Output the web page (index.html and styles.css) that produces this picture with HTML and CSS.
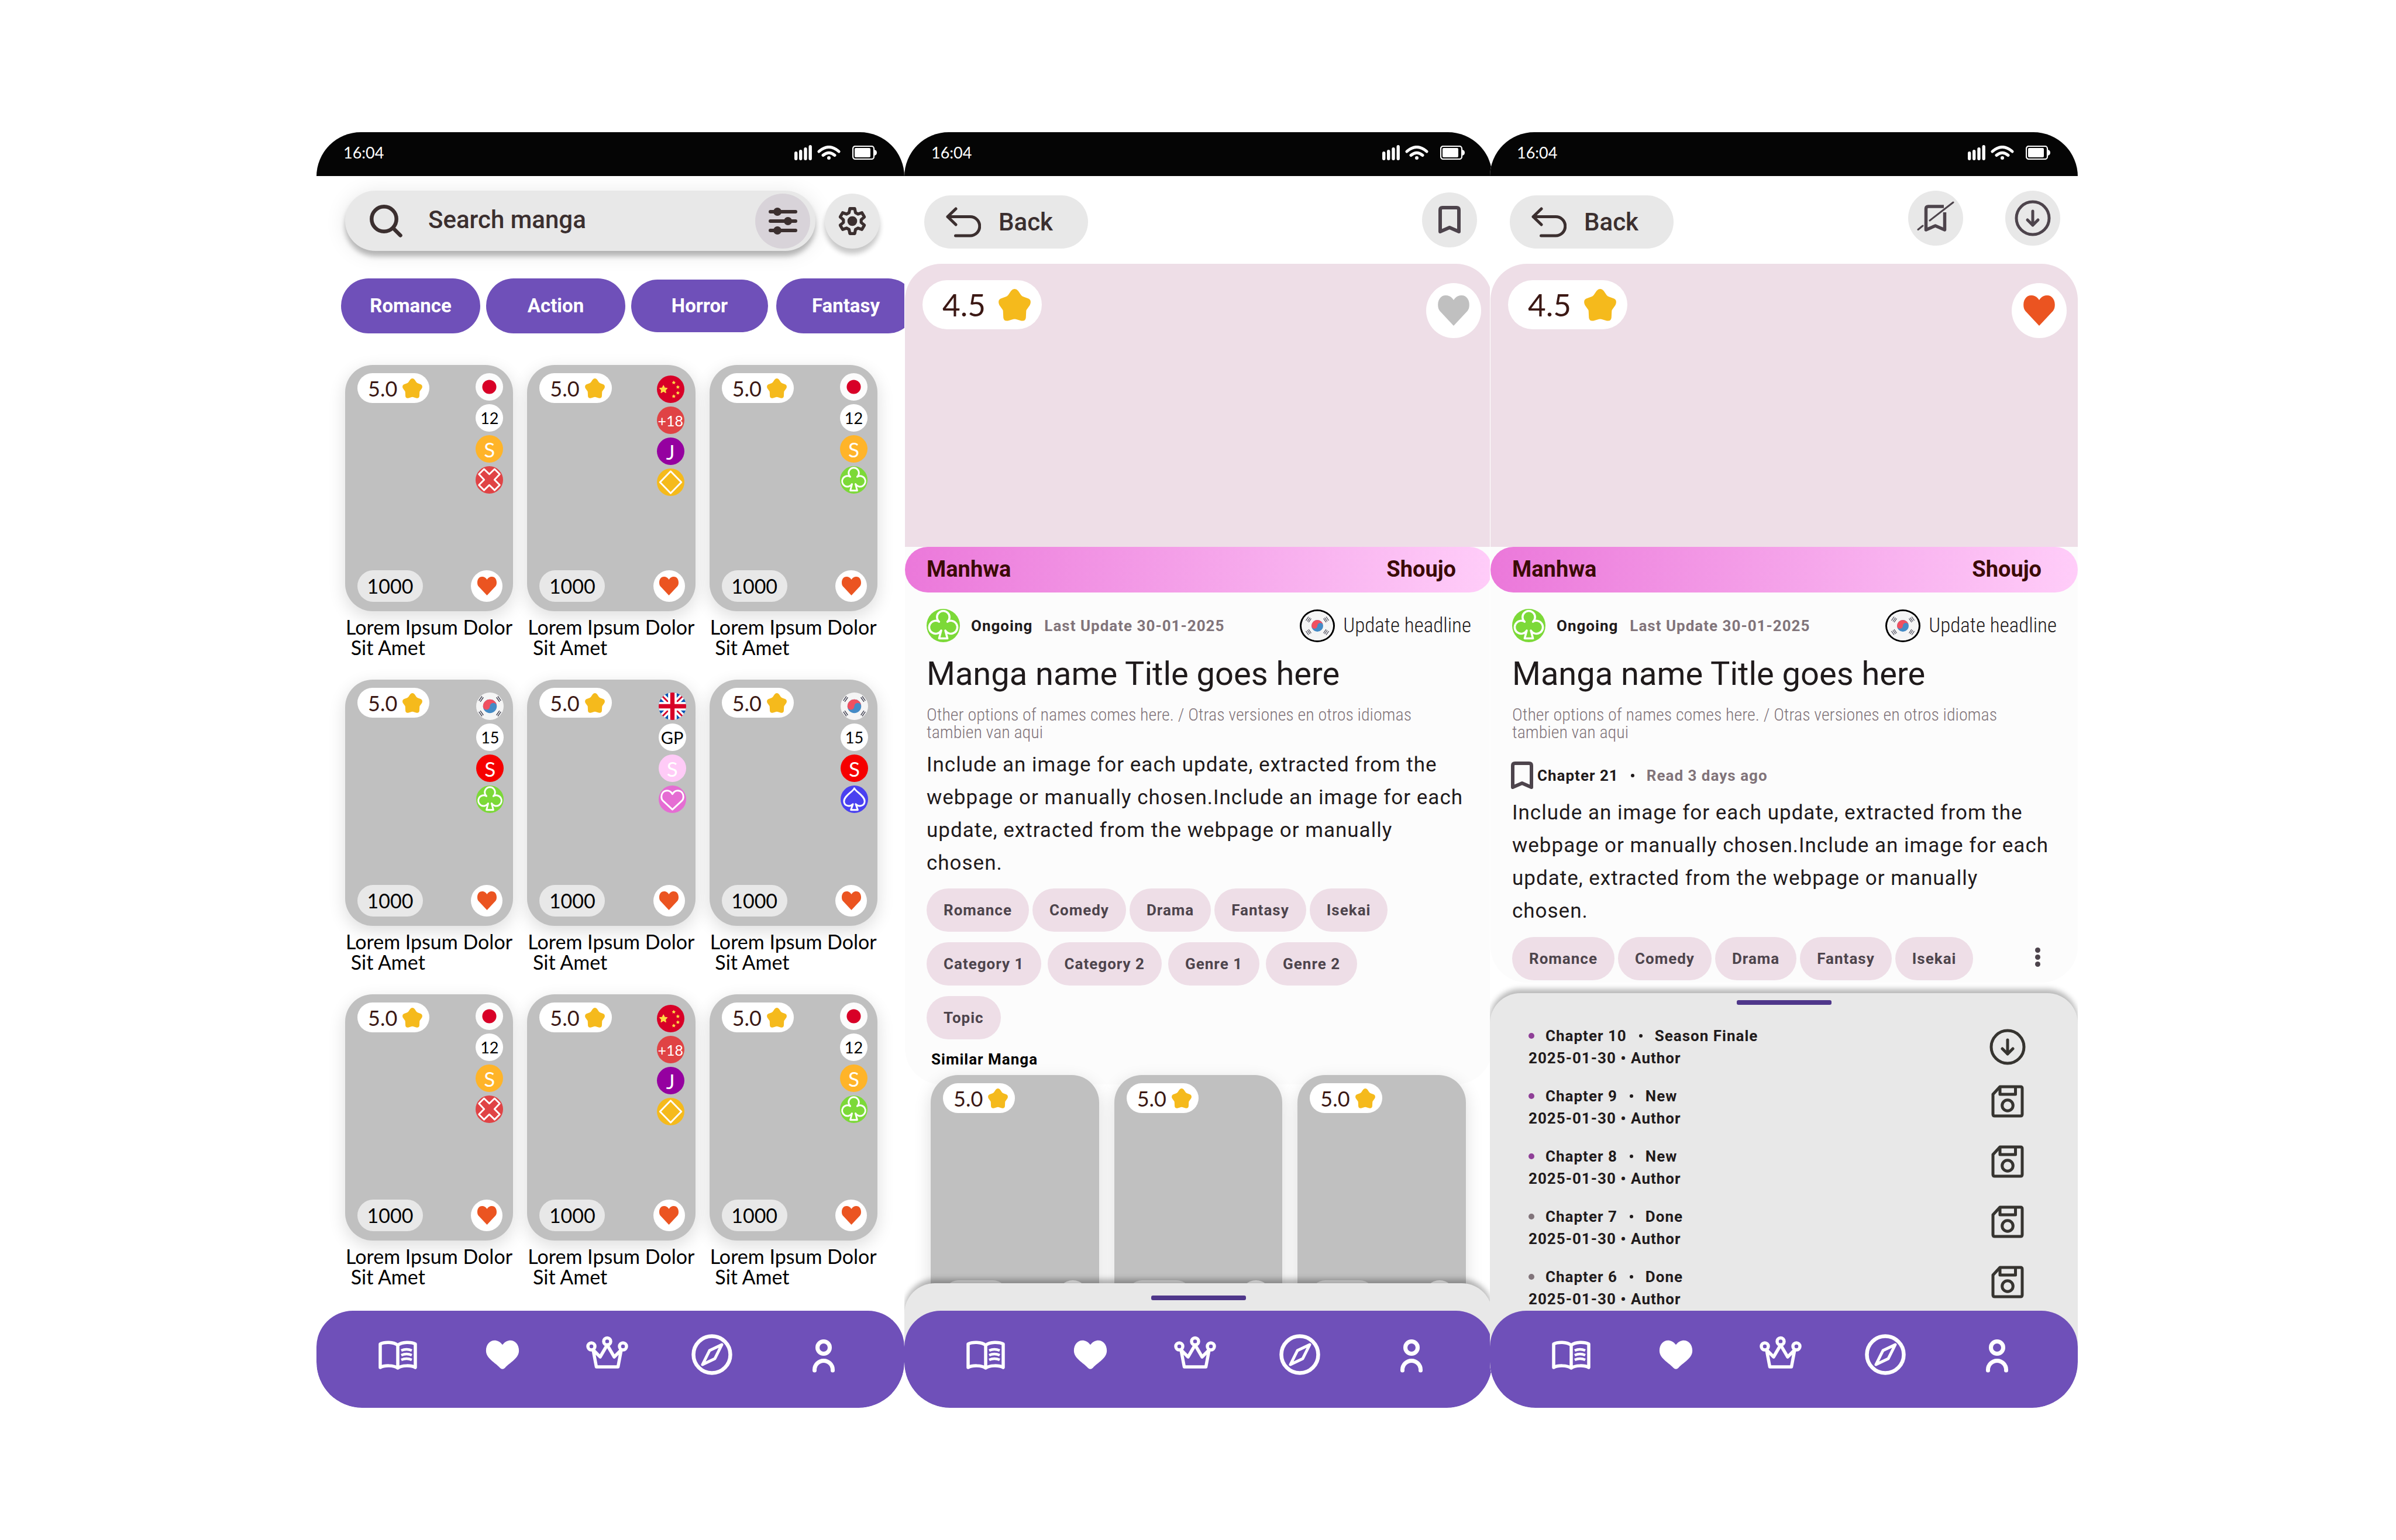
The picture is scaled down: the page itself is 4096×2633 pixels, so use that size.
FILE: index.html
```html
<!DOCTYPE html>
<html lang="en">
<head>
<meta charset="utf-8">
<meta name="viewport" content="width=device-width, initial-scale=1">
<title>Manga reader</title>
<link rel="stylesheet" href="styles.css">
</head>
<body>
<svg class="sprite" aria-hidden="true">
  <symbol id="signal" viewBox="0 0 30 26"><path fill="currentColor" d="M0 14q0-3 2.700-3t2.700 3v9q0 3-2.700 3T0 23zM8 11q0-3 2.700-3t2.700 3v12q0 3-2.700 3T8 23zM16.300 7q0-3 2.700-3t2.700 3v16q0 3-2.700 3t-2.700-3zM24.500 3q0-3 2.700-3t2.700 3v20q0 3-2.700 3t-2.700-3z"/></symbol>
  <symbol id="wifi" viewBox="0 0 40 24"><g fill="none" stroke="currentColor" stroke-width="5" stroke-linecap="round"><path d="M3 10Q20-5 37 10M10 16.500Q20 8 30 16.500"/></g><circle cx="20" cy="21" r="3" fill="currentColor"/></symbol>
  <symbol id="battery" viewBox="0 0 42 24"><rect x="1" y="1" width="36" height="22" rx="4" fill="none" stroke="currentColor" stroke-width="2.200"/><rect x="4" y="4" width="27" height="16" rx="2" fill="currentColor"/><path d="M38 7q4 1 4 5t-4 5z" fill="currentColor"/></symbol>
  <symbol id="search" viewBox="0 0 56 56"><g fill="none" stroke="currentColor" stroke-width="6.500" stroke-linecap="round"><circle cx="24.500" cy="24.500" r="21.200"/><path d="M41 41L52.500 52.500"/></g></symbol>
  <symbol id="sliders" viewBox="0 0 49 46"><path d="M3 7H46M3 23H46M3 39H46" stroke="currentColor" stroke-width="6" stroke-linecap="round"/><g fill="currentColor"><circle cx="15" cy="7" r="7"/><circle cx="33" cy="23" r="7"/><circle cx="15" cy="39" r="7"/></g></symbol>
  <symbol id="gear" viewBox="-24 -24 48 48"><path fill="none" stroke="currentColor" stroke-width="5" stroke-linejoin="round" d="M-4-20.500H4L5.300-13.800 9.300-11.500 15.800-13.700 19.800-6.800 14.600-2.300V2.300L19.800 6.800 15.800 13.700 9.300 11.500 5.300 13.800 4 20.500H-4L-5.300 13.800-9.300 11.500-15.800 13.700-19.800 6.800-14.600 2.300V-2.300L-19.800-6.800-15.800-13.700-9.300-11.500-5.300-13.800z"/><circle r="8" fill="currentColor"/></symbol>
  <symbol id="back" viewBox="0 0 60 52"><path fill="none" stroke="currentColor" stroke-width="5" stroke-linecap="round" stroke-linejoin="round" d="M17 3L3 16.500 17 30M3 16.500H41.500a16 16 0 0 1 0 32.500H16.500"/></symbol>
  <symbol id="bookmark" viewBox="0 0 38 47"><path fill="none" stroke="currentColor" stroke-width="6" stroke-linejoin="round" d="M3 44V7q0-4 4-4H31q4 0 4 4V44L19 37z"/></symbol>
  <symbol id="bookmark-off" viewBox="0 0 64 58"><g fill="none" stroke="currentColor" stroke-linejoin="round"><path stroke-width="5.500" d="M46 9H19.500q-4 0-4 4V49L31.500 42 47.500 49V19"/><path stroke-width="3" stroke-linecap="round" d="M62 2L22 33M10 42L2 48.500"/></g></symbol>
  <symbol id="download" viewBox="0 0 62 62"><g fill="none" stroke="currentColor" stroke-width="5" stroke-linecap="round" stroke-linejoin="round"><circle cx="31" cy="31" r="28"/><path d="M31 19V43M22 34L31 43 40 34"/></g></symbol>
  <symbol id="floppy" viewBox="0 0 56 56"><g fill="none" stroke="currentColor" stroke-width="5" stroke-linejoin="round"><path d="M15 3H50q3 0 3 3V50q0 3-3 3H6q-3 0-3-3V16z"/><path d="M15 3V16H41.500V3"/><circle cx="28" cy="35" r="9.300"/></g></symbol>
  <symbol id="star" viewBox="0 0 100 100"><path fill="#f5ba1c" d="M50 0q6 0 11 6L70 19q3 4 7 5L93 30Q102 34 99 46 98 49 97 51L87 65q-1 2-1 4L85 89Q84 101 71 99L54 94q-4-1-8 0L29 99Q16 101 15 89L14 69q0-2-1-4L3 51Q2 49 1 46-2 34 7 30L23 24q4-1 7-5L39 6q5-6 11-6z"/></symbol>
  <symbol id="heart" viewBox="0 0 100 97"><path fill="currentColor" d="M50 15C44 5 35 0 25 0 8 0 0 15 0 30 0 39 2 45 6 50L50 97 94 50C98 45 100 39 100 30 100 15 92 0 75 0 65 0 56 5 50 15z"/></symbol>
  <symbol id="nav-heart" viewBox="-14 -20 128 128"><path fill="currentColor" d="M50 14C30-11 0 2 0 32 0 56 28 68 42 84q8 8 16 0C72 68 100 56 100 32 100 2 70-11 50 14z"/></symbol>
  <symbol id="book" viewBox="-3 -12 72 72"><g fill="none" stroke="currentColor" stroke-width="5.500" stroke-linejoin="round"><path d="M33 8C26 2 10 2 3 6V46C10 42 26 42 33 47 40 42 56 42 63 46V6C56 2 40 2 33 8V47"/><path stroke-width="4.500" d="M39 17Q48 13 57 17M39 25Q48 21 57 25M39 33Q48 29 57 33"/></g></symbol>
  <symbol id="crown" viewBox="0 -5 72 72"><g fill="none" stroke="currentColor" stroke-width="5.500" stroke-linejoin="round"><circle cx="9" cy="17" r="6"/><circle cx="36" cy="8.500" r="6"/><circle cx="63" cy="17" r="6"/><path d="M12 23L17.500 52H54.500L60 23 48 35 36 14.500 24 35z"/></g></symbol>
  <symbol id="compass" viewBox="-1 -1 72 72"><g fill="none" stroke="currentColor" stroke-width="5" stroke-linejoin="round"><circle cx="35" cy="35" r="31.500" stroke-width="6.500"/><path d="M52 18L31 28 19 52 40 42z"/></g></symbol>
  <symbol id="person" viewBox="-17 -10 72 72"><g fill="none" stroke="currentColor" stroke-width="7" stroke-linecap="round"><circle cx="19" cy="14" r="10.500"/><path d="M3.500 53V52a15.500 15.500 0 0 1 31 0v1"/></g></symbol>
  <symbol id="cross" viewBox="0 0 80 80"><path class="suit" d="M24.700 8.500L40 23.500 55.300 8.500 70.300 23.500 55 39.500 70.300 55 55.300 70 40 55 24.700 70 9.700 55 25 39.500 9.700 23.500z"/></symbol>
  <symbol id="diamond" viewBox="0 0 80 80"><path class="suit" d="M40 8L71 40 40 72 9 40z"/></symbol>
  <symbol id="club" viewBox="0 0 80 80"><path class="suit" d="M30 31A15 15 0 1 1 50 31 15.500 15.500 0 1 1 45 52L50 71H30L35 52A15.500 15.500 0 1 1 30 31z"/></symbol>
  <symbol id="spade" viewBox="0 0 80 80"><path class="suit" d="M40 8C36 18 10 30 10 46 10 59 26 64 36 54L30 71H50L44 54C54 64 70 59 70 46 70 30 44 18 40 8z"/></symbol>
  <symbol id="love" viewBox="0 0 80 80"><path class="suit" d="M40 25C36 18 31 15 25 15 13 15 8 24 8 33 8 38 10 42 13 45L40 70 67 45C70 42 72 38 72 33 72 24 67 15 55 15 49 15 44 18 40 25z"/></symbol>
  <symbol id="jp" viewBox="0 0 80 80"><rect width="80" height="80" fill="#fcfcfc"/><circle cx="40" cy="40" r="20.500" fill="#d80027"/></symbol>
  <symbol id="cn" viewBox="0 0 80 80"><rect width="80" height="80" fill="#d80027"/><g fill="#ffda44"><path stroke="#ffda44" stroke-width="2" stroke-linejoin="round" d="M19 29l3.500 7 7.500 1-5.500 5.500 1.500 7.500-7-4-7 4 1.500-7.500-5.500-5.500 7.500-1z"/><path d="M49 15l2 3.500 3.500.5-2.500 2.500.5 4-3.500-2-3.500 2 .5-4-2.500-2.500 3.500-.5zM61 28l2 3.500 3.500.5-2.500 2.500.5 4-3.500-2-3.500 2 .5-4-2.500-2.500 3.500-.5zM61 45l2 3.500 3.500.5-2.500 2.500.5 4-3.500-2-3.500 2 .5-4-2.500-2.500 3.500-.5zM49 55l2 3.500 3.500.5-2.500 2.500.5 4-3.500-2-3.500 2 .5-4-2.500-2.500 3.500-.5z"/></g></symbol>
  <symbol id="kr" viewBox="0 0 80 80"><rect x="-10" y="-10" width="100" height="100" fill="#f5f5f5"/><circle cx="40" cy="40" r="20" fill="#448bc6"/><path fill="#f05060" d="M20 40A20 20 0 0 1 60 40 10 10 0 0 0 40 40 10 10 0 0 1 20 40z"/><g stroke="#464655" stroke-width="2.500"><path d="M3 21L12 8M8 24L17 11M12 27L21 14M77 21L68 8M72 24L63 11M68 27L59 14M3 59L12 72M8 56L17 69M12 53L21 66M77 59L68 72M72 56L63 69M68 53L59 66"/></g></symbol>
  <symbol id="kr-wide" viewBox="-10 -10 100 100"><rect x="-10" y="-10" width="100" height="100" fill="#f5f5f5"/><circle cx="40" cy="40" r="20" fill="#448bc6"/><path fill="#f05060" d="M20 40A20 20 0 0 1 60 40 10 10 0 0 0 40 40 10 10 0 0 1 20 40z"/><g stroke="#464655" stroke-width="2.500"><path d="M1 22L10 9M6 25L15 12M10 28L19 15M79 22L70 9M74 25L65 12M70 28L61 15M1 58L10 71M6 55L15 68M10 52L19 65M79 58L70 71M74 55L65 68M70 52L61 65"/></g></symbol>
  <symbol id="uk" viewBox="0 0 80 80"><rect width="80" height="80" fill="#0052b4"/><path stroke="#fff" stroke-width="17" d="M0 0L80 80M80 0L0 80"/><path stroke="#d80027" stroke-width="5" d="M0 0L80 80M80 0L0 80"/><path stroke="#fff" stroke-width="25" d="M40 0V80M0 40H80"/><path stroke="#d80027" stroke-width="12.500" d="M40 0V80M0 40H80"/></symbol>
</svg>

<main class="board">
  <section class="phone" aria-label="Browse">
    <div class="status"><time>16:04</time><span class="status-icons"><svg class="i-signal"><use href="#signal"/></svg><svg class="i-wifi"><use href="#wifi"/></svg><svg class="i-battery"><use href="#battery"/></svg></span></div>
    <div class="search-row">
      <form class="search" role="search">
        <svg class="i-search"><use href="#search"/></svg>
        <input type="text" aria-label="Search manga" placeholder="Search manga">
        <button type="button" class="round filter" aria-label="Filters"><svg class="i-sliders"><use href="#sliders"/></svg></button>
      </form>
      <button type="button" class="round settings" aria-label="Settings"><svg class="i-gear"><use href="#gear"/></svg></button>
    </div>
    <div class="categories">
      <button type="button">Romance</button><button type="button">Action</button><button type="button" class="compact">Horror</button><button type="button">Fantasy</button>
    </div>
    <div class="library">
      <article>
        <div class="cover"><span class="rating">5.0<svg><use href="#star"/></svg></span>
          <div class="marks"><svg class="mark"><use href="#jp"/></svg><span class="mark age">12</span><span class="mark amber">S</span><svg class="mark red"><use href="#cross"/></svg></div>
          <div class="cover-foot"><span class="count">1000</span><button type="button" class="like" aria-label="Like"><svg><use href="#heart"/></svg></button></div></div>
        <h3>Lorem Ipsum Dolor<br>&nbsp;Sit Amet</h3>
      </article>
      <article>
        <div class="cover"><span class="rating">5.0<svg><use href="#star"/></svg></span>
          <div class="marks mid"><svg class="mark"><use href="#cn"/></svg><span class="mark age red">+18</span><span class="mark purple">J</span><svg class="mark gold"><use href="#diamond"/></svg></div>
          <div class="cover-foot"><span class="count">1000</span><button type="button" class="like" aria-label="Like"><svg><use href="#heart"/></svg></button></div></div>
        <h3>Lorem Ipsum Dolor<br>&nbsp;Sit Amet</h3>
      </article>
      <article>
        <div class="cover"><span class="rating">5.0<svg><use href="#star"/></svg></span>
          <div class="marks"><svg class="mark"><use href="#jp"/></svg><span class="mark age">12</span><span class="mark amber">S</span><svg class="mark green"><use href="#club"/></svg></div>
          <div class="cover-foot"><span class="count">1000</span><button type="button" class="like" aria-label="Like"><svg><use href="#heart"/></svg></button></div></div>
        <h3>Lorem Ipsum Dolor<br>&nbsp;Sit Amet</h3>
      </article>
      <article>
        <div class="cover"><span class="rating">5.0<svg><use href="#star"/></svg></span>
          <div class="marks low"><svg class="mark"><use href="#kr"/></svg><span class="mark age">15</span><span class="mark scarlet">S</span><svg class="mark green"><use href="#club"/></svg></div>
          <div class="cover-foot"><span class="count">1000</span><button type="button" class="like" aria-label="Like"><svg><use href="#heart"/></svg></button></div></div>
        <h3>Lorem Ipsum Dolor<br>&nbsp;Sit Amet</h3>
      </article>
      <article>
        <div class="cover"><span class="rating">5.0<svg><use href="#star"/></svg></span>
          <div class="marks low"><svg class="mark"><use href="#uk"/></svg><span class="mark age gp">GP</span><span class="mark blush">S</span><svg class="mark pink"><use href="#love"/></svg></div>
          <div class="cover-foot"><span class="count">1000</span><button type="button" class="like" aria-label="Like"><svg><use href="#heart"/></svg></button></div></div>
        <h3>Lorem Ipsum Dolor<br>&nbsp;Sit Amet</h3>
      </article>
      <article>
        <div class="cover"><span class="rating">5.0<svg><use href="#star"/></svg></span>
          <div class="marks low"><svg class="mark"><use href="#kr"/></svg><span class="mark age">15</span><span class="mark scarlet">S</span><svg class="mark blue"><use href="#spade"/></svg></div>
          <div class="cover-foot"><span class="count">1000</span><button type="button" class="like" aria-label="Like"><svg><use href="#heart"/></svg></button></div></div>
        <h3>Lorem Ipsum Dolor<br>&nbsp;Sit Amet</h3>
      </article>
      <article>
        <div class="cover"><span class="rating">5.0<svg><use href="#star"/></svg></span>
          <div class="marks"><svg class="mark"><use href="#jp"/></svg><span class="mark age">12</span><span class="mark amber">S</span><svg class="mark red"><use href="#cross"/></svg></div>
          <div class="cover-foot"><span class="count">1000</span><button type="button" class="like" aria-label="Like"><svg><use href="#heart"/></svg></button></div></div>
        <h3>Lorem Ipsum Dolor<br>&nbsp;Sit Amet</h3>
      </article>
      <article>
        <div class="cover"><span class="rating">5.0<svg><use href="#star"/></svg></span>
          <div class="marks mid"><svg class="mark"><use href="#cn"/></svg><span class="mark age red">+18</span><span class="mark purple">J</span><svg class="mark gold"><use href="#diamond"/></svg></div>
          <div class="cover-foot"><span class="count">1000</span><button type="button" class="like" aria-label="Like"><svg><use href="#heart"/></svg></button></div></div>
        <h3>Lorem Ipsum Dolor<br>&nbsp;Sit Amet</h3>
      </article>
      <article>
        <div class="cover"><span class="rating">5.0<svg><use href="#star"/></svg></span>
          <div class="marks"><svg class="mark"><use href="#jp"/></svg><span class="mark age">12</span><span class="mark amber">S</span><svg class="mark green"><use href="#club"/></svg></div>
          <div class="cover-foot"><span class="count">1000</span><button type="button" class="like" aria-label="Like"><svg><use href="#heart"/></svg></button></div></div>
        <h3>Lorem Ipsum Dolor<br>&nbsp;Sit Amet</h3>
      </article>
    </div>
    <nav class="tabs"><a href="#library" aria-label="Library"><svg><use href="#book"/></svg></a><a href="#favourites" aria-label="Favourites"><svg><use href="#nav-heart"/></svg></a><a href="#top" aria-label="Top"><svg><use href="#crown"/></svg></a><a href="#explore" aria-label="Explore"><svg><use href="#compass"/></svg></a><a href="#profile" aria-label="Profile"><svg><use href="#person"/></svg></a></nav>
  </section>

  <section class="phone" aria-label="Manga details">
    <div class="status"><time>16:04</time><span class="status-icons"><svg class="i-signal"><use href="#signal"/></svg><svg class="i-wifi"><use href="#wifi"/></svg><svg class="i-battery"><use href="#battery"/></svg></span></div>
    <header class="top-bar">
      <button type="button" class="back"><svg><use href="#back"/></svg>Back</button>
      <button type="button" class="round centred" aria-label="Bookmark"><svg class="i-bookmark"><use href="#bookmark"/></svg></button>
    </header>
    <div class="hero"><span class="score">4.5<svg><use href="#star"/></svg></span><button type="button" class="round love" aria-label="Like"><svg><use href="#heart"/></svg></button></div>
    <div class="details">
      <div class="banner"><span>Manhwa</span><span>Shoujo</span></div>
      <div class="info">
        <div class="meta"><svg class="state"><use href="#club"/></svg><span>Ongoing</span><span class="muted">Last Update 30-01-2025</span><svg class="origin" preserveAspectRatio="none"><use href="#kr-wide"/></svg><span class="headline">Update headline</span></div>
        <h1>Manga name Title goes here</h1>
        <p class="aliases">Other options of names comes here. / Otras versiones en otros idiomas tambien van aqui</p>
        <p class="summary">Include an image for each update, extracted from the webpage or manually chosen.Include an image for each update, extracted from the webpage or manually chosen.</p>
        <div class="chips"><button type="button">Romance</button><button type="button">Comedy</button><button type="button">Drama</button><button type="button">Fantasy</button><button type="button">Isekai</button></div>
        <div class="chips wide"><button type="button">Category 1</button><button type="button">Category 2</button><button type="button">Genre 1</button><button type="button">Genre 2</button></div>
        <div class="chips"><button type="button">Topic</button></div>
        <h2>Similar Manga</h2>
      </div>
    </div>
    <div class="similar">
      <div class="cover"><span class="rating">5.0<svg><use href="#star"/></svg></span><div class="cover-foot"><span class="count"></span><span class="like"></span></div></div>
      <div class="cover"><span class="rating">5.0<svg><use href="#star"/></svg></span><div class="cover-foot"><span class="count"></span><span class="like"></span></div></div>
      <div class="cover"><span class="rating">5.0<svg><use href="#star"/></svg></span><div class="cover-foot"><span class="count"></span><span class="like"></span></div></div>
    </div>
    <div class="sheet peek"><span class="handle"></span></div>
    <nav class="tabs"><a href="#library" aria-label="Library"><svg><use href="#book"/></svg></a><a href="#favourites" aria-label="Favourites"><svg><use href="#nav-heart"/></svg></a><a href="#top" aria-label="Top"><svg><use href="#crown"/></svg></a><a href="#explore" aria-label="Explore"><svg><use href="#compass"/></svg></a><a href="#profile" aria-label="Profile"><svg><use href="#person"/></svg></a></nav>
  </section>

  <section class="phone last" aria-label="Manga chapters">
    <div class="status"><time>16:04</time><span class="status-icons"><svg class="i-signal"><use href="#signal"/></svg><svg class="i-wifi"><use href="#wifi"/></svg><svg class="i-battery"><use href="#battery"/></svg></span></div>
    <header class="top-bar">
      <button type="button" class="back"><svg><use href="#back"/></svg>Back</button>
      <button type="button" class="round" aria-label="Remove bookmark"><svg class="i-off"><use href="#bookmark-off"/></svg></button>
      <button type="button" class="round" aria-label="Download"><svg class="i-download"><use href="#download"/></svg></button>
    </header>
    <div class="hero"><span class="score">4.5<svg><use href="#star"/></svg></span><button type="button" class="round love on" aria-label="Unlike"><svg><use href="#heart"/></svg></button></div>
    <div class="details">
      <div class="banner"><span>Manhwa</span><span>Shoujo</span></div>
      <div class="info short">
        <div class="meta"><svg class="state"><use href="#club"/></svg><span>Ongoing</span><span class="muted">Last Update 30-01-2025</span><svg class="origin" preserveAspectRatio="none"><use href="#kr-wide"/></svg><span class="headline">Update headline</span></div>
        <h1>Manga name Title goes here</h1>
        <p class="aliases">Other options of names comes here. / Otras versiones en otros idiomas tambien van aqui</p>
        <div class="progress"><svg class="i-bookmark"><use href="#bookmark"/></svg><span>Chapter 21</span><i class="sep"></i><span class="muted">Read 3 days ago</span></div>
        <p class="summary">Include an image for each update, extracted from the webpage or manually chosen.Include an image for each update, extracted from the webpage or manually chosen.</p>
        <div class="chips"><button type="button">Romance</button><button type="button">Comedy</button><button type="button">Drama</button><button type="button">Fantasy</button><button type="button">Isekai</button><button type="button" class="more" aria-label="More"><i></i><i></i><i></i></button></div>
      </div>
    </div>
    <div class="sheet open"><span class="handle"></span>
      <ul class="chapters">
        <li><div><p><i class="dot new"></i>Chapter 10<i class="sep"></i>Season Finale</p><p>2025-01-30 • Author</p></div><button type="button" aria-label="Download chapter 10"><svg class="i-download"><use href="#download"/></svg></button></li>
        <li><div><p><i class="dot new"></i>Chapter 9<i class="sep"></i>New</p><p>2025-01-30 • Author</p></div><button type="button" class="saved" aria-label="Chapter 9 saved"><svg class="i-floppy"><use href="#floppy"/></svg></button></li>
        <li><div><p><i class="dot new"></i>Chapter 8<i class="sep"></i>New</p><p>2025-01-30 • Author</p></div><button type="button" class="saved" aria-label="Chapter 8 saved"><svg class="i-floppy"><use href="#floppy"/></svg></button></li>
        <li><div><p><i class="dot"></i>Chapter 7<i class="sep"></i>Done</p><p>2025-01-30 • Author</p></div><button type="button" class="saved" aria-label="Chapter 7 saved"><svg class="i-floppy"><use href="#floppy"/></svg></button></li>
        <li><div><p><i class="dot"></i>Chapter 6<i class="sep"></i>Done</p><p>2025-01-30 • Author</p></div><button type="button" class="saved" aria-label="Chapter 6 saved"><svg class="i-floppy"><use href="#floppy"/></svg></button></li>
      </ul>
    </div>
    <nav class="tabs"><a href="#library" aria-label="Library"><svg><use href="#book"/></svg></a><a href="#favourites" aria-label="Favourites"><svg><use href="#nav-heart"/></svg></a><a href="#top" aria-label="Top"><svg><use href="#crown"/></svg></a><a href="#explore" aria-label="Explore"><svg><use href="#compass"/></svg></a><a href="#profile" aria-label="Profile"><svg><use href="#person"/></svg></a></nav>
  </section>
</main>
</body>
</html>
```
FILE: styles.css
```css
* { box-sizing: border-box; }
body { margin: 0; background: #fff; font-family: Roboto, sans-serif; color: #1f1a1b; }
button { margin: 0; padding: 0; border: 0; background: none; font: inherit; color: inherit; display: flex; align-items: center; justify-content: center; flex: none; }
svg { display: block; flex: none; }
h1, h2, h3, p, ul { margin: 0; padding: 0; font-weight: 400; }
.sprite { position: absolute; width: 0; height: 0; }

.board { display: flex; height: 100vh; padding: 226px 544px 226px 541px; }
.phone { position: relative; flex: 1; min-width: 0; display: flex; flex-direction: column; overflow: hidden; background: #fff; border-radius: 76px 76px 78px 78px; }
.phone.last { margin-left: -4px; }

/* status bar */
.status { flex: none; display: flex; justify-content: space-between; align-items: center; height: 75px; padding: 0 47px 6px 46px; background: #050505; color: #fff; font-family: Lato, sans-serif; font-size: 27px; line-height: 32px; }
.status-icons { display: flex; align-items: center; }
.i-signal { width: 30px; height: 26px; margin-right: 9px; }
.i-wifi { width: 40px; height: 24px; margin-right: 20px; }
.i-battery { width: 42px; height: 24px; }

.round { width: 94px; height: 94px; border-radius: 50%; background: #e8e8e8; color: #4d444c; }

/* browse screen */
.search-row { display: flex; align-items: center; gap: 16px; padding: 25px 42px 0 49px; }
.search { flex: 1; min-width: 0; display: flex; align-items: center; height: 103px; padding: 0 9px 0 42px; border-radius: 52px; background: #e8e8e8; color: #3b2f2f; box-shadow: 0 9px 9px rgba(0, 0, 0, .25), 0 4px 36px rgba(0, 0, 0, .1); }
.search input { flex: 1; min-width: 0; margin: 0 0 4px; padding: 0 0 0 44px; border: 0; background: none; font: 500 42px/50px Roboto, sans-serif; color: inherit; }
.search input::placeholder { color: inherit; opacity: 1; }
.i-search { width: 56px; height: 56px; }
.filter { background: #d8d3d9; color: #3b2f2f; }
.i-sliders { width: 49px; height: 46px; }
.settings { color: #3b2f2f; box-shadow: 0 9px 9px rgba(0, 0, 0, .22); }
.i-gear { width: 50px; height: 50px; }

.categories { display: flex; align-items: center; gap: 10px; margin-top: 47px; padding-left: 42px; }
.categories button { width: 238px; height: 94px; border-radius: 47px; background: #6f50b9; color: #fff; font-size: 33px; font-weight: 700; line-height: 38px; }
.categories .compact { width: 234px; height: 90px; margin-right: 4px; }

.library { flex: none; display: grid; grid-template-columns: repeat(3, 1fr); gap: 38px 24px; margin: 54px 46px 0 49px; }
.library h3 { margin-top: 9px; padding-left: 1px; font-family: Lato, sans-serif; font-size: 34px; line-height: 35px; color: #000; white-space: nowrap; }

.cover { position: relative; display: flex; flex-direction: column; justify-content: space-between; align-items: flex-start; height: 421px; padding: 14px 18px 16px 21px; border-radius: 47px; background: #c0c0c0; box-shadow: 0 9px 28px 2px rgba(0, 0, 0, .12); }
.rating { display: flex; align-items: center; gap: 9px; height: 51px; padding: 0 12px 0 18px; border-radius: 26px; background: #fff; color: #3b1814; font-family: Lato, sans-serif; font-size: 36px; line-height: 40px; }
.rating svg { width: 34px; height: 34px; }
.marks { position: absolute; top: 14px; right: 17px; display: grid; gap: 6px; }
.marks.mid { top: 18px; right: 19px; }
.marks.low { top: 22px; right: 16px; }
.mark { display: flex; align-items: center; justify-content: center; width: 47px; height: 47px; border-radius: 50%; overflow: hidden; color: #fff; font-family: Lato, sans-serif; font-size: 35px; line-height: 40px; }
.mark.age { background: #fff; color: #000; font-size: 27px; }
.mark.gp { font-size: 29px; }
.suit { fill: none; stroke: #fff; stroke-width: 5; stroke-linejoin: round; }
.mark.red { background: #e04345; color: #fff; font-size: 25px; }
.amber { background: #ffb429; }
.purple { background: #9500a0; }
.gold { background: #f5ba1c; }
.green, .state { background: #7cd938; }
.scarlet { background: #f60000; }
.blush { background: #ffcbf7; }
.pink { background: #e56dd3; }
.blue { background: #4a41f0; }
.cover-foot { align-self: stretch; display: flex; justify-content: space-between; }
.count { display: flex; align-items: center; justify-content: center; width: 112px; height: 54px; border-radius: 27px; background: #e8e8e8; color: #000; font-family: Lato, sans-serif; font-size: 34px; line-height: 40px; }
.like { width: 54px; height: 54px; border-radius: 50%; background: #fff; color: #eb5421; }
.like svg { width: 33px; height: 32px; }

/* detail screens */
.top-bar { flex: none; display: flex; align-items: flex-start; gap: 72px; height: 150px; padding: 25px 30px 26px 34px; }
.back { align-self: flex-end; gap: 30px; height: 91px; padding: 0 60px 0 37px; margin-right: auto; border-radius: 46px; background: #e8e8e8; color: #3b2f2f; font-size: 42px; font-weight: 500; line-height: 50px; }
.back svg { width: 60px; height: 52px; }
.centred { align-self: center; margin-right: -4px; }
.i-bookmark { width: 38px; height: 47px; color: #4d444c; }
.i-off { width: 64px; height: 58px; }
.i-download { width: 62px; height: 62px; }

.hero { flex: none; display: flex; justify-content: space-between; align-items: flex-start; height: 484px; margin-left: 1px; padding: 28px 19px 0 30px; border-radius: 62px 62px 0 0; background: #eedee7; }
.score { display: flex; align-items: center; gap: 22px; height: 84px; padding: 0 19px 0 34px; border-radius: 43px; background: #fff; color: #3b1814; font-family: Lato, sans-serif; font-size: 53px; line-height: 60px; }
.score svg { width: 55px; height: 55px; }
.love { margin-top: 5px; background: #fff; color: #c0c0c0; }
.love.on { color: #eb5421; }
.love svg { width: 54px; height: 52px; }

.details { flex: none; margin-left: 1px; border-radius: 0 0 62px 62px; background: #fcfcfc; }
.banner { display: flex; align-items: center; justify-content: space-between; height: 78px; padding: 0 62px 2px 37px; border-radius: 39px; background: linear-gradient(90deg, #eb78da, #ffcdf9); color: #3b0b04; font-size: 38px; font-weight: 700; line-height: 46px; }
.info { padding: 28px 36px 26px 37px; }
.info.short { padding-bottom: 4px; }
.meta { display: flex; align-items: center; height: 57px; font-size: 26px; font-weight: 700; line-height: 34px; letter-spacing: 1px; }
.muted { color: #81747a; }
.state { width: 57px; height: 57px; margin-right: 19px; border-radius: 50%; }
.meta .muted { margin-left: 20px; margin-right: auto; }
.origin { width: 60px; height: 56px; margin-right: 14px; border: 3px solid #000; border-radius: 50%; }
.headline { font-family: "Roboto Condensed", Roboto, sans-serif; font-size: 35px; font-weight: 300; letter-spacing: 0; }
h1 { margin-top: 21px; font-size: 56px; line-height: 66px; }
.aliases { margin-top: 22px; padding-right: 40px; font-family: "Roboto Condensed", Roboto, sans-serif; font-size: 30px; font-weight: 300; line-height: 30px; color: #81747a; }
.summary { margin-top: 13px; padding-right: 8px; font-size: 35px; line-height: 56px; letter-spacing: 1px; }
.chips { display: flex; gap: 6px; margin-top: 18px; }
.summary + .chips { margin-top: 15px; }
.short .summary + .chips { margin-top: 16px; }
.chips.wide { gap: 11px; }
.chips button { height: 74px; padding: 0 29px; border-radius: 37px; background: #eedee7; color: #4d444c; font-size: 26px; font-weight: 700; line-height: 34px; letter-spacing: 1px; }
.chips .more { flex-direction: column; gap: 3px; width: 24px; margin: 0 21px 6px auto; padding: 0; background: none; height: 68px; }
.more i { width: 9px; height: 9px; border-radius: 50%; background: #4d444c; }
h2 { margin-top: 17px; padding-left: 8px; color: #000; font-size: 26px; font-weight: 700; line-height: 34px; letter-spacing: 1px; }
.progress { display: flex; align-items: center; height: 47px; margin-top: 35px; font-size: 26px; font-weight: 700; line-height: 34px; letter-spacing: 1px; }
.progress .i-bookmark { margin-right: 7px; margin-left: -2px; }
.sep { flex: none; display: inline-block; width: 6px; height: 6px; margin: 0 21px; border-radius: 50%; background: #1f1a1b; vertical-align: middle; }

.similar { flex: none; display: grid; grid-template-columns: repeat(3, 1fr); gap: 26px; margin-top: -16px; padding: 0 45px; }

/* chapter sheet */
.sheet { display: flex; flex-direction: column; align-items: center; background: #e8e8e8; border-radius: 52px 52px 0 0; box-shadow: 0 -7px 10px rgba(0, 0, 0, .28); }
.sheet.peek { position: absolute; left: 0; right: 0; bottom: 0; height: 213px; padding-top: 21px; }
.sheet.open { position: relative; flex: 1; margin-top: 18px; padding-top: 12px; }
.handle { flex: none; width: 162px; height: 8px; border-radius: 3px; background: #4f378a; }
.chapters { align-self: stretch; display: grid; gap: 27px; margin-top: 34px; padding: 0 89px 0 66px; list-style: none; font-size: 26px; line-height: 38px; letter-spacing: 1px; }
.chapters li { display: flex; align-items: center; justify-content: space-between; }
.chapters p { font-weight: 700; }
.chapters p:first-child { display: flex; align-items: center; }
.dot { width: 10px; height: 10px; margin-right: 19px; border-radius: 50%; background: #81747a; }
.dot.new { background: #8f3f97; }
.chapters button { width: 62px; color: #363430; }
.chapters .saved { margin-bottom: 20px; }
.i-floppy { width: 56px; height: 56px; }

/* bottom tabs */
.tabs { position: absolute; left: 0; right: 0; bottom: 0; display: flex; gap: 107px; height: 166px; padding: 39px 0 0 103px; border-radius: 62px 62px 78px 78px; background: #6f50b9; color: #fff; }
.tabs a { color: inherit; }
.tabs a:last-child { margin-left: 12px; }
.tabs svg { width: 72px; height: 72px; }
```
